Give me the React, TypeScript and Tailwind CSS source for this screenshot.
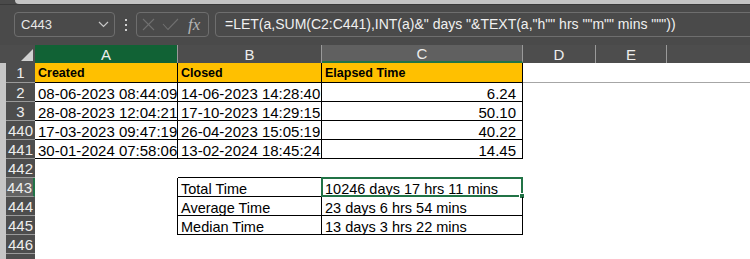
import type { ReactNode } from "react";

const COLS = [
  { key: "A", w: "w-[143px]" },
  { key: "B", w: "w-[144px]" },
  { key: "C", w: "w-[201px]" },
  { key: "D", w: "w-[73px]" },
  { key: "E", w: "w-[71px]" },
];

interface CellProps {
  w: string;
  className?: string;
  children?: ReactNode;
}

function Cell({ w, className = "", children }: CellProps) {
  return (
    <div className={`${w} shrink-0 h-full relative flex items-end overflow-visible whitespace-nowrap ${className}`}>
      {children}
    </div>
  );
}

interface RowProps {
  label: string;
  tall?: boolean;
  active?: boolean;
  children?: ReactNode;
}

function Row({ label, tall, active, children }: RowProps) {
  return (
    <div className={`flex ${tall ? "h-[20px]" : "h-[19px]"}`}>
      <div className="w-[6px] shrink-0 bg-[#c6c6c6]" />
      <div
        className={`w-[29px] shrink-0 flex items-center justify-center text-[15px] leading-none text-[#ededed] border-b border-[#9a9a9a] ${
          active ? "bg-[#636363] border-r-2 border-r-[#217346]" : "bg-[#4d4d4d]"
        }`}
      >
        {label}
      </div>
      {children}
    </div>
  );
}

const data = [
  { n: "2", a: "08-06-2023 08:44:09", b: "14-06-2023 14:28:40", c: "6.24" },
  { n: "3", a: "28-08-2023 12:04:21", b: "17-10-2023 14:29:15", c: "50.10" },
  { n: "440", a: "17-03-2023 09:47:19", b: "26-04-2023 15:05:19", c: "40.22" },
  { n: "441", a: "30-01-2024 07:58:06", b: "13-02-2024 18:45:24", c: "14.45" },
];

const summary = [
  { n: "443", label: "Total Time", value: "10246 days 17 hrs 11 mins", active: true },
  { n: "444", label: "Average Time", value: "23 days 6 hrs 54 mins" },
  { n: "445", label: "Median Time", value: "13 days 3 hrs 22 mins" },
];

export default function App() {
  return (
    <div className="w-[750px] h-[259px] overflow-hidden bg-white font-['Liberation_Sans',Arial,sans-serif]">
      {/* window top edge */}
      <div className="h-[5px] flex bg-[#4a4a4a] border-b border-[#3a3a3a]">
        <div className="w-[15px]" />
        <div className="flex-1 h-[4px] bg-[#c4c4c4] rounded-bl-[6px]" />
      </div>

      {/* formula bar */}
      <div className="h-[40px] bg-[#4a4a4a] flex items-start pt-[7px] overflow-hidden">
        <div className="ml-[14px] w-[101px] h-[25px] shrink-0 border border-[#6e6e6e] rounded-[4px] flex items-center justify-between pl-[6px] pr-[5px] text-[13px] text-[#e8e8e8]">
          <span>C443</span>
          <svg width="11" height="7" viewBox="0 0 11 7" fill="none" stroke="#c8c8c8" strokeWidth="1.2">
            <polyline points="1,1 5.5,5.5 10,1" />
          </svg>
        </div>
        <div className="ml-[10px] w-[2px] h-[25px] shrink-0 flex flex-col items-center justify-center gap-[3px]">
          <div className="w-[2px] h-[2px] bg-[#cfcfcf]" />
          <div className="w-[2px] h-[2px] bg-[#cfcfcf]" />
          <div className="w-[2px] h-[2px] bg-[#cfcfcf]" />
        </div>
        <div className="ml-[9px] w-[73px] h-[25px] shrink-0 border border-[#6e6e6e] rounded-[4px] flex items-center pl-[5px]">
          <svg width="13" height="13" viewBox="0 0 13 13" fill="none" stroke="#707070" strokeWidth="1.1">
            <line x1="1" y1="1" x2="12" y2="12" />
            <line x1="12" y1="1" x2="1" y2="12" />
          </svg>
          <svg className="ml-[7px]" width="17" height="13" viewBox="0 0 17 13" fill="none" stroke="#707070" strokeWidth="1.1">
            <polyline points="1,6 6,11.5 16,1" />
          </svg>
          <span className="ml-[9px] text-[17px] leading-none italic text-[#b4b4b4] font-['Liberation_Serif',serif]">
            fx
          </span>
        </div>
        <div className="ml-[6px] w-[600px] h-[25px] shrink-0 border border-[#6e6e6e] rounded-[4px] flex items-center pl-[9px] text-[14px] text-[#f0f0f0] whitespace-nowrap">
          {'=LET(a,SUM(C2:C441),INT(a)&" days "&TEXT(a,"h"" hrs ""m"" mins """))'}
        </div>
      </div>

      {/* column headers */}
      <div className="h-[18px] flex bg-[#4d4d4d] text-[15px] leading-none text-[#ededed]">
        <div className="w-[35px] shrink-0 relative">
          <svg className="absolute right-[2px] bottom-[2px]" width="12" height="12" viewBox="0 0 12 12">
            <polygon points="12,0 12,12 0,12" fill="#d0d0d0" />
          </svg>
        </div>
        {COLS.map((c) => (
          <div
            key={c.key}
            className={`${c.w} shrink-0 flex items-center justify-center border-r border-[#9a9a9a] ${
              c.key === "A" ? "bg-[#116235]" : c.key === "C" ? "bg-[#606060] border-b-2 border-b-[#217346]" : ""
            }`}
          >
            {c.key}
          </div>
        ))}
        <div className="flex-1" />
      </div>

      {/* header row */}
      <Row label="1" tall>
        {["Created", "Closed", "Elapsed Time"].map((t, i) => (
          <Cell key={t} w={COLS[i].w} className="bg-[#ffc000] border-r border-b border-black pl-[3px] pb-[2px]">
            <span className="text-[12.5px] leading-[13px] font-bold text-black">{t}</span>
          </Cell>
        ))}
        <div className="flex-1 h-full border-b border-[#a6a6a6]" />
      </Row>

      {/* data rows */}
      {data.map((r) => (
        <Row key={r.n} label={r.n}>
          <Cell w={COLS[0].w} className="border-r border-b border-black pl-[3px]">
            <span className="text-[15px] leading-[14px] text-black">{r.a}</span>
          </Cell>
          <Cell w={COLS[1].w} className="border-r border-b border-black pl-[3px]">
            <span className="text-[15px] leading-[14px] text-black">{r.b}</span>
          </Cell>
          <Cell w={COLS[2].w} className="border-r border-b border-black justify-end pr-[6px]">
            <span className="text-[15px] leading-[14px] text-black">{r.c}</span>
          </Cell>
        </Row>
      ))}

      <Row label="442">
        <Cell w={COLS[0].w} />
        <Cell w={COLS[1].w} className="border-b border-black" />
        <Cell w={COLS[2].w} className="border-b border-black" />
      </Row>

      {summary.map((s) => (
        <Row key={s.n} label={s.n} active={s.active}>
          <Cell w={COLS[0].w} className="border-r border-black" />
          <Cell w={COLS[1].w} className="border-r border-b border-black pl-[3px]">
            <span className="text-[14.5px] leading-[14px] text-black">{s.label}</span>
          </Cell>
          <Cell w={COLS[2].w} className="border-r border-b border-black pl-[3px]">
            <span className="text-[14.5px] leading-[14px] text-black">{s.value}</span>
            {s.active && (
              <>
                <div className="absolute -left-[1px] -top-[1px] -right-[1px] -bottom-[1px] border-2 border-[#217346]" />
                <div className="absolute -right-[3px] -bottom-[3px] w-[6px] h-[6px] bg-[#217346] border border-white" />
              </>
            )}
          </Cell>
        </Row>
      ))}

      <Row label="446" />
      <Row label="" />
    </div>
  );
}
